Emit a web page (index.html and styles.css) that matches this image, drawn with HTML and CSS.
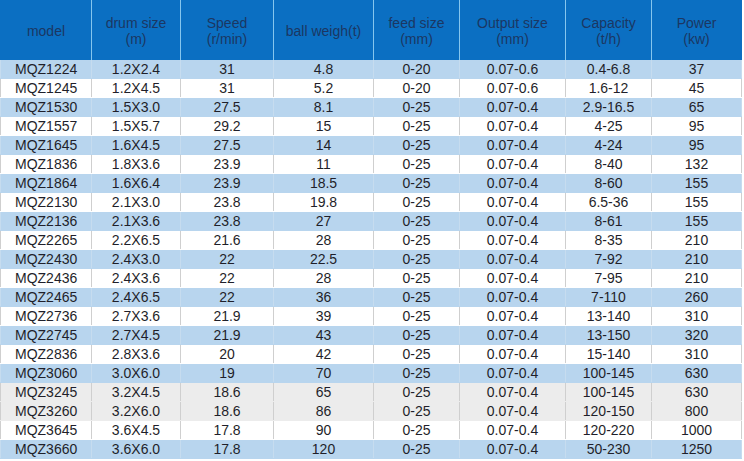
FILE: index.html
```html
<!DOCTYPE html>
<html>
<head>
<meta charset="utf-8">
<link rel="stylesheet" href="styles.css">
</head>
<body>
<table class="spec">
  <colgroup>
    <col class="c1"><col class="c2"><col class="c3"><col class="c4"><col class="c5"><col class="c6"><col class="c7"><col class="c8">
  </colgroup>
  <thead>
    <tr>
      <th>model</th>
      <th>drum size<br>(m)</th>
      <th>Speed<br>(r/min)</th>
      <th>ball weigh(t)</th>
      <th>feed size<br>(mm)</th>
      <th>Output size<br>(mm)</th>
      <th>Capacity<br>(t/h)</th>
      <th>Power<br>(kw)</th>
    </tr>
  </thead>
  <tbody>
    <tr class="blue"><td>MQZ1224</td><td>1.2X2.4</td><td>31</td><td>4.8</td><td>0-20</td><td>0.07-0.6</td><td>0.4-6.8</td><td>37</td></tr>
    <tr class="white"><td>MQZ1245</td><td>1.2X4.5</td><td>31</td><td>5.2</td><td>0-20</td><td>0.07-0.6</td><td>1.6-12</td><td>45</td></tr>
    <tr class="blue"><td>MQZ1530</td><td>1.5X3.0</td><td>27.5</td><td>8.1</td><td>0-25</td><td>0.07-0.4</td><td>2.9-16.5</td><td>65</td></tr>
    <tr class="white"><td>MQZ1557</td><td>1.5X5.7</td><td>29.2</td><td>15</td><td>0-25</td><td>0.07-0.4</td><td>4-25</td><td>95</td></tr>
    <tr class="blue"><td>MQZ1645</td><td>1.6X4.5</td><td>27.5</td><td>14</td><td>0-25</td><td>0.07-0.4</td><td>4-24</td><td>95</td></tr>
    <tr class="white"><td>MQZ1836</td><td>1.8X3.6</td><td>23.9</td><td>11</td><td>0-25</td><td>0.07-0.4</td><td>8-40</td><td>132</td></tr>
    <tr class="blue"><td>MQZ1864</td><td>1.6X6.4</td><td>23.9</td><td>18.5</td><td>0-25</td><td>0.07-0.4</td><td>8-60</td><td>155</td></tr>
    <tr class="white"><td>MQZ2130</td><td>2.1X3.0</td><td>23.8</td><td>19.8</td><td>0-25</td><td>0.07-0.4</td><td>6.5-36</td><td>155</td></tr>
    <tr class="blue"><td>MQZ2136</td><td>2.1X3.6</td><td>23.8</td><td>27</td><td>0-25</td><td>0.07-0.4</td><td>8-61</td><td>155</td></tr>
    <tr class="white"><td>MQZ2265</td><td>2.2X6.5</td><td>21.6</td><td>28</td><td>0-25</td><td>0.07-0.4</td><td>8-35</td><td>210</td></tr>
    <tr class="blue"><td>MQZ2430</td><td>2.4X3.0</td><td>22</td><td>22.5</td><td>0-25</td><td>0.07-0.4</td><td>7-92</td><td>210</td></tr>
    <tr class="white"><td>MQZ2436</td><td>2.4X3.6</td><td>22</td><td>28</td><td>0-25</td><td>0.07-0.4</td><td>7-95</td><td>210</td></tr>
    <tr class="blue"><td>MQZ2465</td><td>2.4X6.5</td><td>22</td><td>36</td><td>0-25</td><td>0.07-0.4</td><td>7-110</td><td>260</td></tr>
    <tr class="white"><td>MQZ2736</td><td>2.7X3.6</td><td>21.9</td><td>39</td><td>0-25</td><td>0.07-0.4</td><td>13-140</td><td>310</td></tr>
    <tr class="blue"><td>MQZ2745</td><td>2.7X4.5</td><td>21.9</td><td>43</td><td>0-25</td><td>0.07-0.4</td><td>13-150</td><td>320</td></tr>
    <tr class="white"><td>MQZ2836</td><td>2.8X3.6</td><td>20</td><td>42</td><td>0-25</td><td>0.07-0.4</td><td>15-140</td><td>310</td></tr>
    <tr class="blue"><td>MQZ3060</td><td>3.0X6.0</td><td>19</td><td>70</td><td>0-25</td><td>0.07-0.4</td><td>100-145</td><td>630</td></tr>
    <tr class="gray"><td>MQZ3245</td><td>3.2X4.5</td><td>18.6</td><td>65</td><td>0-25</td><td>0.07-0.4</td><td>100-145</td><td>630</td></tr>
    <tr class="gray"><td>MQZ3260</td><td>3.2X6.0</td><td>18.6</td><td>86</td><td>0-25</td><td>0.07-0.4</td><td>120-150</td><td>800</td></tr>
    <tr class="white"><td>MQZ3645</td><td>3.6X4.5</td><td>17.8</td><td>90</td><td>0-25</td><td>0.07-0.4</td><td>120-220</td><td>1000</td></tr>
    <tr class="blue"><td>MQZ3660</td><td>3.6X6.0</td><td>17.8</td><td>120</td><td>0-25</td><td>0.07-0.4</td><td>50-230</td><td>1250</td></tr>
  </tbody>
</table>
</body>
</html>
```

FILE: styles.css
```css
html, body {
  margin: 0;
  padding: 0;
  background: #ffffff;
}

.spec {
  border-collapse: collapse;
  table-layout: fixed;
  width: 741px;
  font-family: "Liberation Sans", Arial, sans-serif;
  font-size: 14px;
  color: #1f1f2a;
  border-top: 1px solid #d0d0d0;
  border-left: 1px solid #d0d0d0;
}

.c1 { width: 91px; }
.c2 { width: 89px; }
.c3 { width: 93px; }
.c4 { width: 100px; }
.c5 { width: 86px; }
.c6 { width: 106px; }
.c7 { width: 86px; }
.c8 { width: 90px; }

.spec th {
  background: #0b6fc2;
  color: #1b3763;
  font-weight: normal;
  height: 59px;
  padding: 0;
  line-height: 16px;
  text-align: center;
  vertical-align: middle;
  border-top: 1px solid #0b6fc2;
  border-left: 1px solid #86c6ee;
  border-right: 1px solid #86c6ee;
}

.spec th:first-child {
  border-left: 1px solid #0b6fc2;
}

.spec th:last-child {
  border-right: 1px solid #0b6fc2;
}

.spec td {
  height: 18px;
  padding: 0;
  line-height: 18px;
  text-align: center;
  border-left: 1px solid #cfcfcf;
  border-right: 1px solid #cfcfcf;
  border-bottom: 1px solid transparent;
  white-space: nowrap;
}

.spec td:first-child {
  text-align: left;
  padding-left: 14px;
}

.spec tr.blue td {
  background: #b8d5ee;
  border-bottom-color: #b8d5ee;
  border-left-color: #c6dcef;
  border-right-color: #c6dcef;
}

.spec tr.white td {
  background: #ffffff;
  border-bottom-color: #ffffff;
}

.spec tr.gray td {
  background: #ececec;
  border-bottom-color: #ececec;
}
```
